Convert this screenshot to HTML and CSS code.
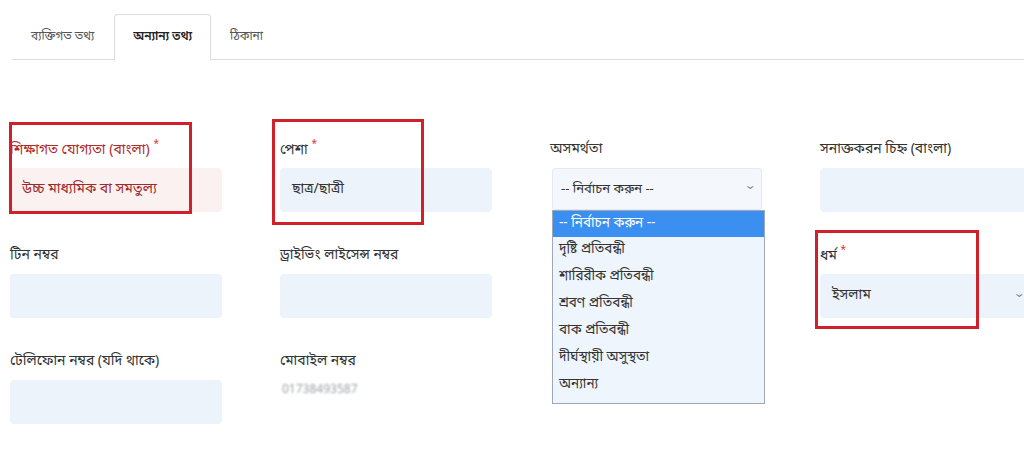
FILE: index.html
```html
<!DOCTYPE html>
<html lang="bn">
<head>
<meta charset="utf-8">
<link rel="stylesheet" href="styles.css">
</head>
<body>
<div class="page">
  <nav class="tabs">
    <div class="tab">ব্যক্তিগত তথ্য</div>
    <div class="tab active">অন্যান্য তথ্য</div>
    <div class="tab">ঠিকানা</div>
  </nav>

  <div class="form">
    <div class="field">
      <label class="label invalid">শিক্ষাগত যোগ্যতা (বাংলা) <span class="req">*</span></label>
      <div class="input pink">উচ্চ মাধ্যমিক বা সমতুল্য</div>
      <div class="mark mark-edu"></div>
    </div>

    <div class="field">
      <label class="label">পেশা <span class="req">*</span></label>
      <div class="input">ছাত্র/ছাত্রী</div>
      <div class="mark mark-job"></div>
    </div>

    <div class="field">
      <label class="label">অসমর্থতা</label>
      <div class="select">
        <span>-- নির্বাচন করুন --</span>
        <span class="chev">&#x2304;</span>
      </div>
      <ul class="dropdown">
        <li class="sel">-- নির্বাচন করুন --</li>
        <li>দৃষ্টি প্রতিবন্ধী</li>
        <li>শারিরীক প্রতিবন্ধী</li>
        <li>শ্রবণ প্রতিবন্ধী</li>
        <li>বাক প্রতিবন্ধী</li>
        <li>দীর্ঘস্থায়ী অসুস্থতা</li>
        <li>অন্যান্য</li>
      </ul>
    </div>

    <div class="field">
      <label class="label">সনাক্তকরন চিহ্ন (বাংলা)</label>
      <div class="input"></div>
    </div>

    <div class="field">
      <label class="label">টিন নম্বর</label>
      <div class="input"></div>
    </div>

    <div class="field">
      <label class="label">ড্রাইভিং লাইসেন্স নম্বর</label>
      <div class="input"></div>
    </div>

    <div class="field"></div>

    <div class="field">
      <label class="label">ধর্ম <span class="req">*</span></label>
      <div class="input select-r">ইসলাম<span class="chev edge">&#x2304;</span></div>
      <div class="mark mark-rel"></div>
    </div>

    <div class="field">
      <label class="label">টেলিফোন নম্বর (যদি থাকে)</label>
      <div class="input"></div>
    </div>

    <div class="field">
      <label class="label">মোবাইল নম্বর</label>
      <div class="plain">01738493587</div>
    </div>
  </div>
</div>
</body>
</html>
```

FILE: styles.css
```css
* { box-sizing: border-box; }
html, body { margin: 0; padding: 0; background: #fff; }
body {
  width: 1024px;
  height: 465px;
  overflow: hidden;
  font-family: "Noto Sans Bengali", "Noto Sans", "Liberation Sans", sans-serif;
  color: #333;
}
.page { padding: 14px 0 0 12px; }

.tabs {
  display: flex;
  border-bottom: 1px solid #dcdcdc;
  height: 46px;
}
.tab {
  padding: 0 17px;
  height: 46px;
  line-height: 44px;
  font-size: 12px;
  color: #555;
  border: 1px solid transparent;
  border-radius: 4px 4px 0 0;
}
.tab:first-child { padding-left: 18px; padding-right: 19px; }
.tab.active {
  border-color: #dcdcdc;
  border-bottom-color: #fff;
  background: #fff;
  color: #222;
  font-weight: 600;
  height: 47px;
  margin: 0 1px 0 0;
  padding: 0 18px;
}

.form {
  display: grid;
  grid-template-columns: repeat(4, 212px);
  column-gap: 58px;
  row-gap: 34px;
  margin-top: 80px;
  margin-left: -2px;
}
.field { position: relative; }
.label {
  display: block;
  font-size: 14px;
  line-height: 20px;
  height: 20px;
  margin-bottom: 8px;
  color: #333;
  white-space: nowrap;
}
.label.invalid { color: #b02a2a; }
.req {
  color: #d9342b;
  font-size: 10px;
  line-height: 10px;
  vertical-align: 7px;
}

.input {
  height: 44px;
  background: #edf3fb;
  border-radius: 4px;
  font-size: 14px;
  line-height: 44px;
  padding: 0 12px;
  color: #333;
}
.input.pink { background: #fcf1f1; color: #9b2b2b; }
.select-r { position: relative; }
.chev { color: #666; font-size: 12px; }
.chev.edge { position: absolute; right: 10px; top: -2px; }

.select {
  height: 42px;
  margin-left: 2px;
  border: 1px solid #e3e9f1;
  background: #f4f8fc;
  border-radius: 3px;
  display: flex;
  align-items: center;
  justify-content: space-between;
  padding: 0 8px;
  font-size: 13px;
}
.select .chev { position: relative; top: -3px; }

.dropdown {
  position: absolute;
  left: 2px;
  top: 70px;
  width: 213px;
  margin: 0;
  padding: 0 0 4px;
  list-style: none;
  background: #eef5fc;
  border: 1px solid #9fa9b5;
  z-index: 2;
}
.dropdown li {
  height: 27px;
  line-height: 27px;
  padding: 0 6px;
  font-size: 13.5px;
  color: #333;
  white-space: nowrap;
}
.dropdown li.sel { background: #3a8ff0; color: #fff; height: 26px; line-height: 26px; }

.plain {
  font-size: 12px;
  color: #9aa0a6;
  filter: blur(1.1px);
  line-height: 20px;
  padding-left: 2px;
}

.mark {
  position: absolute;
  border: 3px solid #d0202a;
  pointer-events: none;
}
.mark-edu { left: -1px; top: -18px; width: 183px; height: 92px; }
.mark-job { left: -8px; top: -21px; width: 152px; height: 106px; }
.mark-rel { left: -5px; top: -16px; width: 164px; height: 99px; }
```
